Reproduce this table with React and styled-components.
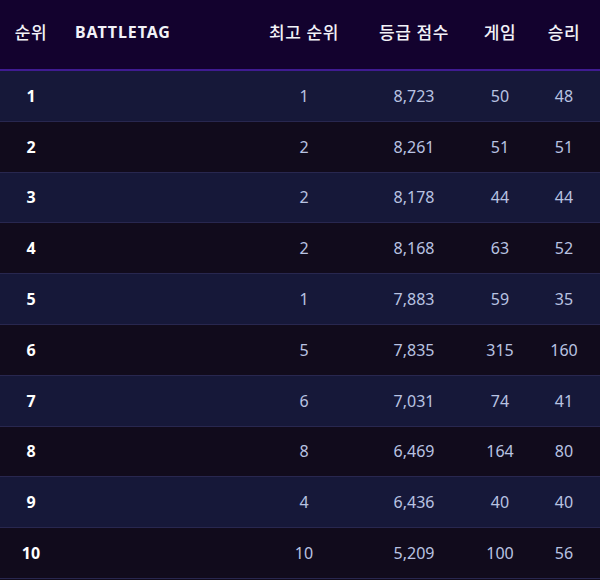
import React from 'react'
import styled, { createGlobalStyle } from 'styled-components';

const GlobalStyle = createGlobalStyle`
    body {
        margin: 0;
        background: #110b1c;
        font-family: "Noto Sans", "Noto Sans CJK KR", sans-serif;
    }
`;

const players = [
    { rank: 1, best: 1, score: '8,723', games: 50, wins: 48 },
    { rank: 2, best: 2, score: '8,261', games: 51, wins: 51 },
    { rank: 3, best: 2, score: '8,178', games: 44, wins: 44 },
    { rank: 4, best: 2, score: '8,168', games: 63, wins: 52 },
    { rank: 5, best: 1, score: '7,883', games: 59, wins: 35 },
    { rank: 6, best: 5, score: '7,835', games: 315, wins: 160 },
    { rank: 7, best: 6, score: '7,031', games: 74, wins: 41 },
    { rank: 8, best: 8, score: '6,469', games: 164, wins: 80 },
    { rank: 9, best: 4, score: '6,436', games: 40, wins: 40 },
    { rank: 10, best: 10, score: '5,209', games: 100, wins: 56 },
];

function App() {
    return (
        <Table>
            <GlobalStyle />
            <Header>
                <Cell>순위</Cell>
                <Cell $left $latin>BATTLETAG</Cell>
                <Cell>최고 순위</Cell>
                <Cell>등급 점수</Cell>
                <Cell>게임</Cell>
                <Cell>승리</Cell>
            </Header>
            {players.map((p, i) => (
                <Row key={p.rank} $odd={i % 2 === 0}>
                    <RankCell>{p.rank}</RankCell>
                    <Cell $left></Cell>
                    <Value>{p.best}</Value>
                    <Value>{p.score}</Value>
                    <Value>{p.games}</Value>
                    <Value>{p.wins}</Value>
                </Row>
            ))}
        </Table>
    )
}

const Table = styled.div`
    width: 600px;
    display: flex;
    flex-direction: column;
`;

const Grid = styled.div`
    display: grid;
    grid-template-columns: 62px 186px 112px 108px 64px 64px;
    padding-right: 4px;
    align-items: center;
`;

const Header = styled(Grid)`
    height: 71px;
    box-sizing: border-box;
    background: #13022e;
    border-bottom: 2px solid #3f1b91;
    color: #f2f2f8;
    padding-bottom: 6px;
`;

const Row = styled(Grid)`
    height: 50.8px;
    box-sizing: border-box;
    background: ${p => p.$odd ? '#161839' : '#110b1c'};
    border-bottom: 1px solid #28274f;
`;

const Cell = styled.div`
    text-align: ${p => p.$left ? 'left' : 'center'};
    padding-left: ${p => p.$left ? '13px' : '0'};
    font-weight: ${p => p.$latin ? 700 : 500};
    font-size: ${p => p.$latin ? '16px' : '17px'};
    letter-spacing: ${p => p.$latin ? '0.9px' : '0.6px'};
`;

const RankCell = styled.div`
    text-align: center;
    color: #ffffff;
    font-weight: 700;
    font-size: 16px;
`;

const Value = styled.div`
    text-align: center;
    color: #b9c3e2;
    font-size: 16px;
    font-weight: 400;
`;

export default App;
